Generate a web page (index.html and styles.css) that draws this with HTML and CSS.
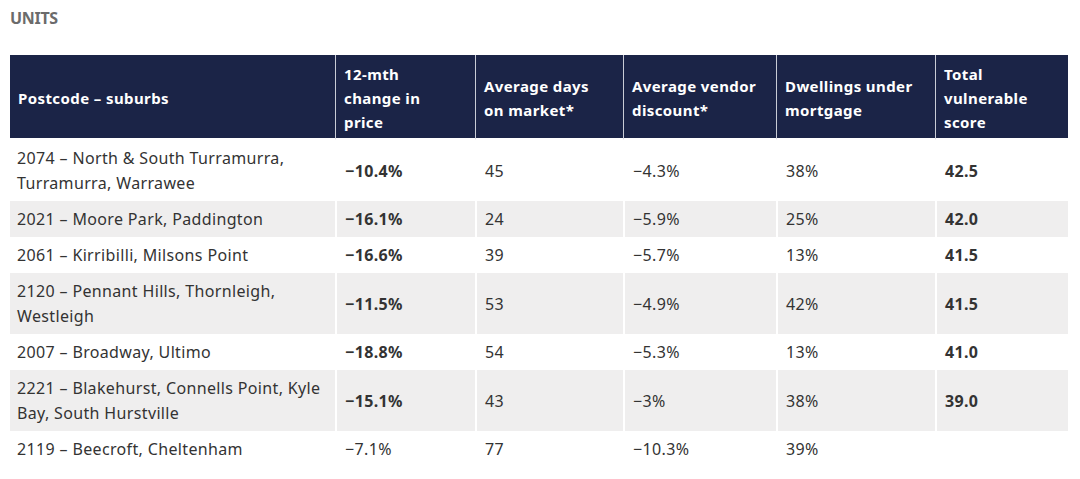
FILE: index.html
```html
<!DOCTYPE html>
<html lang="en">
<head>
<meta charset="utf-8">
<title>Units</title>
<link rel="stylesheet" href="styles.css">
</head>
<body>
<h2 class="title">UNITS</h2>
<table class="data">
  <colgroup>
    <col class="c1"><col class="c2"><col class="c3"><col class="c4"><col class="c5"><col class="c6">
  </colgroup>
  <thead>
    <tr>
      <th>Postcode – suburbs</th>
      <th class="tight">12-mth change in price</th>
      <th class="mid">Average days on market*</th>
      <th>Average vendor discount*</th>
      <th>Dwellings under mortgage</th>
      <th class="mid">Total vulnerable score</th>
    </tr>
  </thead>
  <tbody>
    <tr><td>2074 – North &amp; South Turramurra, Turramurra, Warrawee</td><td class="b">−10.4%</td><td>45</td><td>−4.3%</td><td>38%</td><td class="b">42.5</td></tr>
    <tr class="alt"><td>2021 – Moore Park, Paddington</td><td class="b">−16.1%</td><td>24</td><td>−5.9%</td><td>25%</td><td class="b">42.0</td></tr>
    <tr><td>2061 – Kirribilli, Milsons Point</td><td class="b">−16.6%</td><td>39</td><td>−5.7%</td><td>13%</td><td class="b">41.5</td></tr>
    <tr class="alt"><td>2120 – Pennant Hills, Thornleigh, Westleigh</td><td class="b">−11.5%</td><td>53</td><td>−4.9%</td><td>42%</td><td class="b">41.5</td></tr>
    <tr><td>2007 – Broadway, Ultimo</td><td class="b">−18.8%</td><td>54</td><td>−5.3%</td><td>13%</td><td class="b">41.0</td></tr>
    <tr class="alt"><td>2221 – Blakehurst, Connells Point, Kyle Bay, South Hurstville</td><td class="b">−15.1%</td><td>43</td><td>−3%</td><td>38%</td><td class="b">39.0</td></tr>
    <tr><td>2119 – Beecroft, Cheltenham</td><td>−7.1%</td><td>77</td><td>−10.3%</td><td>39%</td><td></td></tr>
  </tbody>
</table>
</body>
</html>
```
FILE: styles.css
```css
html, body {
  margin: 0;
  padding: 0;
  background: #ffffff;
}
body {
  padding: 7px 12px 0 10px;
  font-family: "Noto Sans", "Open Sans", "Liberation Sans", sans-serif;
  color: #333333;
}
.title {
  margin: 0 0 26px 0;
  font-size: 16px;
  line-height: 22px;
  font-weight: 700;
  color: #6b6b6b;
  letter-spacing: -0.3px;
}
.data {
  width: 1058px;
  table-layout: fixed;
  border-collapse: separate;
  border-spacing: 0;
  font-size: 16px;
  line-height: 25px;
  letter-spacing: 0.35px;
}
.c1 { width: 325px; }
.c2 { width: 140px; }
.c3 { width: 148px; }
.c4 { width: 153px; }
.c5 { width: 159px; }
.c6 { width: 133px; }
.data th {
  background: #1b2447;
  color: #ffffff;
  font-weight: 700;
  text-align: left;
  padding: 7px 8px 4px 8px;
  border-left: 1px solid #c9ccd6;
  border-bottom: 2px solid #ffffff;
  vertical-align: middle;
  font-size: 15px;
  line-height: 24px;
  letter-spacing: 0.4px;
}
.data th.tight { padding-right: 30px; }
.data th.mid { padding-right: 20px; }
.data th:first-child { border-left: none; }
.data td {
  padding: 6px 8px 5px 8px;
  vertical-align: middle;
  border-left: 2px solid #ffffff;
  text-align: left;
}
.data td:first-child { border-left: none; padding-left: 7px; }
.data tr.alt td { background: #efeeee; }
.data td.b { font-weight: 700; }
```
